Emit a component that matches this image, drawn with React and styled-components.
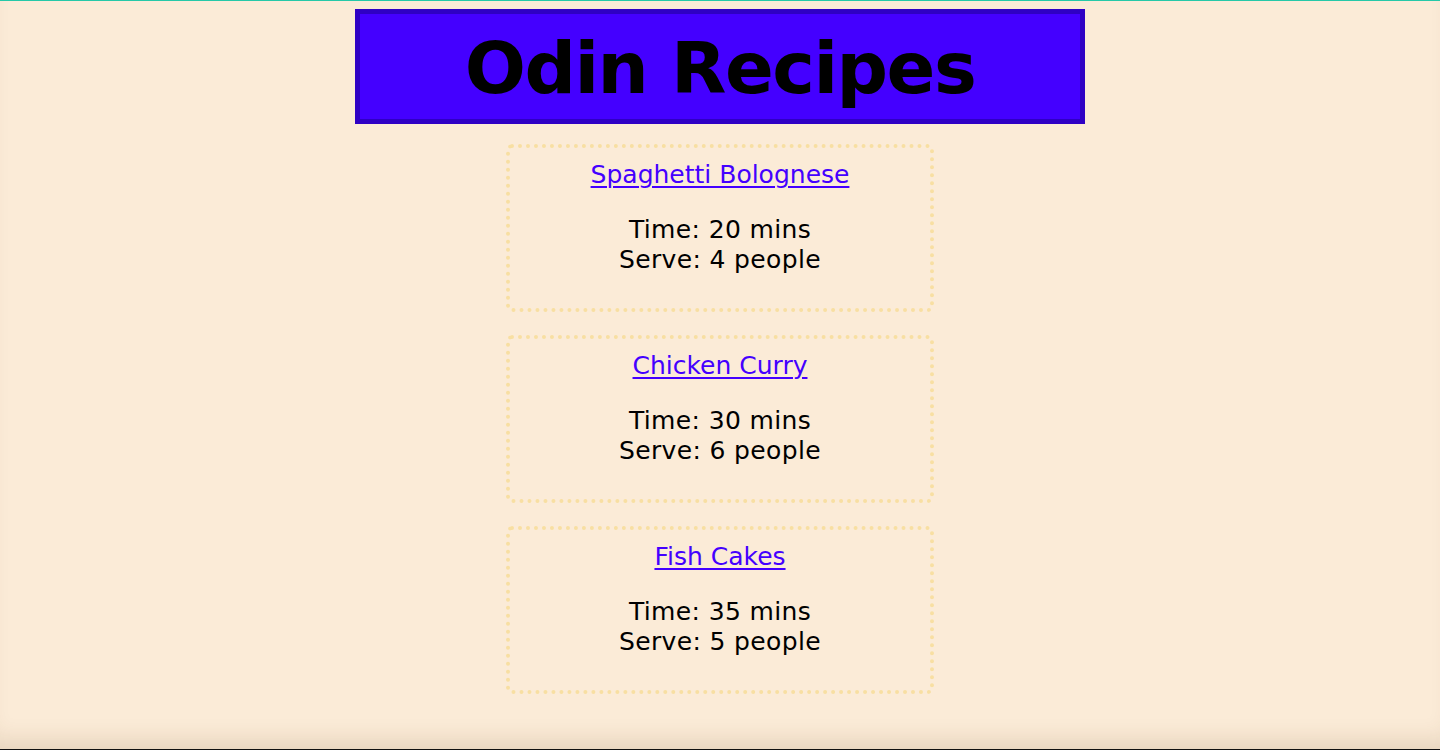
import React from "react";
import styled, { createGlobalStyle } from "styled-components";

const GlobalStyle = createGlobalStyle`
  html, body {
    margin: 0;
    padding: 0;
    background: #fbebd7;
  }
  body {
    font-family: "DejaVu Sans", Verdana, sans-serif;
  }
`;

const Frame = styled.div`
  box-sizing: border-box;
  height: 750px;
  overflow: hidden;
  border-top: 1px solid #25c8a8;
  border-bottom: 1px solid #111;
  padding-top: 8px;
  background: #fbebd7;
  box-shadow: inset 0 -22px 22px -12px rgba(90, 60, 20, 0.12);
  display: flex;
  flex-direction: column;
  align-items: center;
`;

const Header = styled.header`
  box-sizing: border-box;
  width: 730px;
  height: 115px;
  background: #4400ff;
  border: 5px solid #2f00c4;
  display: flex;
  align-items: center;
  justify-content: center;
`;

const Title = styled.h1`
  margin: 0;
  font-family: "DejaVu Sans", Verdana, sans-serif;
  font-weight: bold;
  font-size: 72px;
  letter-spacing: -1.5px;
  line-height: 1;
  color: #000;
  padding-top: 3px;
`;

const List = styled.main`
  margin-top: 20px;
  display: flex;
  flex-direction: column;
  gap: 23px;
`;

const Card = styled.section`
  box-sizing: border-box;
  width: 428px;
  height: 168px;
  border: 4px dotted #f8dfa2;
  border-radius: 6px;
  padding: 12px 0 0;
  text-align: center;
  font-size: 25px;
  line-height: 30px;
  color: #000;
`;

const RecipeLink = styled.a`
  display: block;
  color: #4400ff;
  text-decoration: underline;
  text-underline-offset: 3px;
  text-decoration-thickness: 2px;
`;

const Info = styled.p`
  margin: 25px 0 0;
  letter-spacing: 0.35px;
`;

const recipes = [
  { name: "Spaghetti Bolognese", time: 20, serve: 4 },
  { name: "Chicken Curry", time: 30, serve: 6 },
  { name: "Fish Cakes", time: 35, serve: 5 },
];

export default function App() {
  return (
    <>
      <GlobalStyle />
      <Frame>
        <Header>
          <Title>Odin Recipes</Title>
        </Header>
        <List>
          {recipes.map((r) => (
            <Card key={r.name}>
              <RecipeLink href="#">{r.name}</RecipeLink>
              <Info>
                Time: {r.time} mins
                <br />
                Serve: {r.serve} people
              </Info>
            </Card>
          ))}
        </List>
      </Frame>
    </>
  );
}
